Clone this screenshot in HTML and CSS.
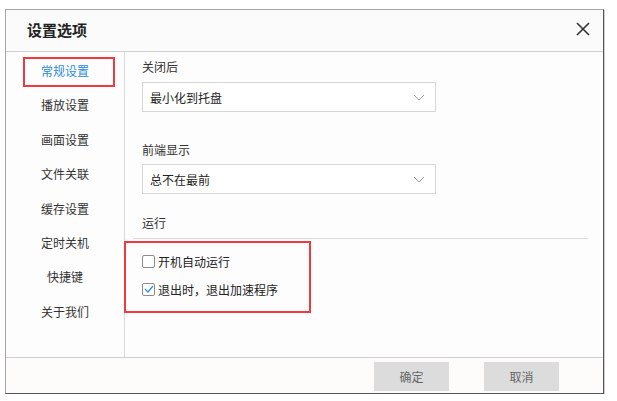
FILE: index.html
```html
<!DOCTYPE html>
<html lang="zh-CN">

<head>
    <meta charset="utf-8">
    <meta name="viewport" content="width=device-width, initial-scale=1.0">
    <title>设置选项</title>
    <link rel="stylesheet" href="styles.css">
</head>

<body>
    <section class="dialog">
        <div class="dialog_top">
            <h2>设置选项</h2>
            <div class="luk">
                <svg width="14" height="14" viewBox="0 0 14 14">
                    <path d="M1 1 L13 13 M13 1 L1 13" stroke="#333" stroke-width="1.6" fill="none"/>
                </svg>
            </div>
        </div>
        <div class="dialog_body">
            <ul class="menu">
                <li class="active">常规设置<span class="mark"></span></li>
                <li>播放设置</li>
                <li>画面设置</li>
                <li>文件关联</li>
                <li>缓存设置</li>
                <li>定时关机</li>
                <li>快捷键</li>
                <li>关于我们</li>
            </ul>
            <div class="content">
                <p class="label">关闭后</p>
                <div class="select">
                    <span>最小化到托盘</span>
                    <svg width="12" height="7" viewBox="0 0 12 7">
                        <path d="M1 1 L6 6 L11 1" stroke="#999" stroke-width="1" fill="none"/>
                    </svg>
                </div>
                <p class="label gap">前端显示</p>
                <div class="select">
                    <span>总不在最前</span>
                    <svg width="12" height="7" viewBox="0 0 12 7">
                        <path d="M1 1 L6 6 L11 1" stroke="#999" stroke-width="1" fill="none"/>
                    </svg>
                </div>
                <p class="label section">运行</p>
                <div class="line"></div>
                <div class="checks">
                    <label class="check"><span class="box"></span>开机自动运行</label>
                    <label class="check"><span class="box checked">
                        <svg width="10" height="10" viewBox="0 0 10 10">
                            <path d="M1 5 L4 8 L9 2" stroke="#2b8de3" stroke-width="1.2" fill="none"/>
                        </svg>
                    </span>退出时，退出加速程序</label>
                </div>
            </div>
        </div>
        <div class="dialog_bottom">
            <div class="knap">确定</div>
            <div class="knap">取消</div>
        </div>
    </section>
</body></html>
```

FILE: styles.css
```css
body {
    margin: 0;
    background-color: #ffffff;
    font-family: "Noto Sans CJK SC", "Noto Sans", sans-serif;
    font-size: 12px;
    color: #333;
}

.dialog {
    width: 599px;
    height: 385px;
    box-sizing: border-box;
    margin: 9px 0 0 5px;
    border: 1px solid #a6a6a6;
    border-right-color: #555;
    border-bottom-color: #555;
    box-shadow: 1px 1px 0 #cfcfcf;
    background-color: #fdfdfd;
    display: flex;
    flex-direction: column;
}

.dialog_top {
    height: 42px;
    box-sizing: border-box;
    border-bottom: 1px solid #cfcfcf;
    display: flex;
    align-items: center;
    justify-content: space-between;
    padding: 0 13px 3px 21px;
    background-color: #fbfbfb;
}

.dialog_top h2 {
    margin: 0;
    font-size: 15px;
    font-weight: bold;
    color: #222;
}

.luk {
    display: flex;
    cursor: pointer;
}

.dialog_body {
    flex: 1;
    display: flex;
    border-bottom: 1px solid #cfcfcf;
}

.menu {
    list-style: none;
    margin: 0;
    padding: 2px 0 0 0;
    width: 118px;
    border-right: 1px solid #d9d9d9;
}

.menu li {
    position: relative;
    height: 34.4px;
    line-height: 34.4px;
    text-align: center;
    color: #333;
}

.menu li.active {
    color: #2b8de3;
}

.mark {
    position: absolute;
    left: 17px;
    top: 3px;
    width: 92px;
    height: 30px;
    box-sizing: border-box;
    border: 2px solid #f0393c;
}

.content {
    flex: 1;
    padding: 7px 0 0 17px;
}

.label {
    margin: 0;
    line-height: 16px;
    color: #333;
}

.label.gap {
    margin-top: 30px;
}

.label.section {
    margin-top: 21px;
}

.select {
    width: 294px;
    height: 30px;
    box-sizing: border-box;
    margin-top: 7px;
    border: 1px solid #d6d6d6;
    background-color: #fff;
    display: flex;
    align-items: center;
    justify-content: space-between;
    padding: 0 10px 0 7px;
    color: #222;
}

.label.gap + .select {
    margin-top: 6px;
}

.line {
    margin: 7px 0 0 -9px;
    width: 455px;
    height: 1px;
    background-color: #d9d9d9;
}

.checks {
    margin: 2px 0 0 -18px;
    width: 187px;
    box-sizing: border-box;
    border: 2px solid #f0393c;
    padding: 8px 0 12px 16px;
}

.check {
    display: flex;
    align-items: center;
    height: 20px;
    color: #222;
}

.check + .check {
    margin-top: 8px;
}

.box {
    width: 13px;
    height: 13px;
    box-sizing: border-box;
    border: 1px solid #8c8c8c;
    border-radius: 2px;
    background-color: #fff;
    margin-right: 3px;
    display: flex;
    align-items: center;
    justify-content: center;
}

.dialog_bottom {
    height: 35px;
    box-sizing: border-box;
    padding: 4px 44px 0 0;
    display: flex;
    justify-content: flex-end;
    gap: 35px;
    background-color: #fdfcfa;
}

.knap {
    width: 75px;
    height: 29px;
    line-height: 29px;
    text-align: center;
    background-color: #dcdcdc;
    color: #666;
}
```
